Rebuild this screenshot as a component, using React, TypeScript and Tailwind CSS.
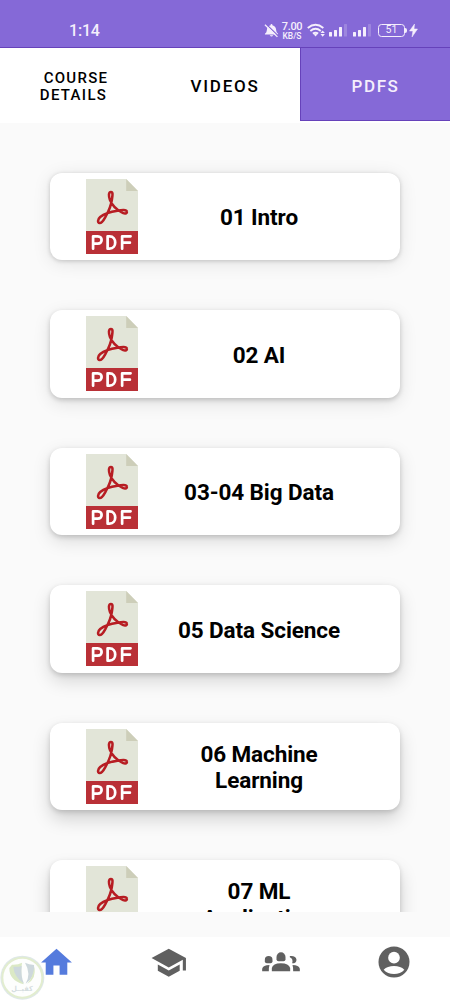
import React from "react";
import { MdHome, MdSchool } from "react-icons/md";

function PdfIcon() {
  return (
    <svg width="52" height="75" viewBox="0 0 154 225" preserveAspectRatio="none" className="mb-[0.5px] block shrink-0">
      <path d="M0 0h119l35 36v122H0z" fill="#e2e5d8" />
      <path d="M119 0l35 36h-35z" fill="#cdceb9" />
      <path d="M0 156h154v69H0z" fill="#b93036" />
      <path
        d="M74 39C66 39 67 52 71 63C78 80 90 91 104 99C114 106 122 104 121 98C120 91 105 93 93 95C73 98 53 105 42 114C34 121 34 132 40 132C48 133 53 122 59 111C69 93 75 76 77 60C79 47 80 39 74 39z"
        fill="none" stroke="#b71d23" strokeWidth="7.5" strokeLinejoin="round"
      />
      <g fill="none" stroke="#fff" strokeWidth="8" strokeLinecap="round" strokeLinejoin="round">
        <path d="M21 209V172h14c15 0 15 22 0 22H21" />
        <path d="M64 172v37h6c22 0 22-37 0-37z" />
        <path d="M107 209v-37h25M107 191h23" />
      </g>
    </svg>
  );
}

function BellOff() {
  return (
    <svg className="mt-px" width="15" height="15" viewBox="0 0 16 15">
      <path d="M8 .7a1 1 0 0 0-1 1.1Q3.2 3 3 7.2q0 2.4-2 3.7v.9h14v-.9q-2-1.3-2-3.7Q12.8 3 9 1.8A1 1 0 0 0 8 .7zM6.1 12.6q1.9 2.5 3.8 0z" fill="#f5effc" />
      <path d="M2.3 .8L15 13" stroke="#8569d7" strokeWidth="1.3" />
      <path d="M1 1.4L14.3 14.3" stroke="#f5effc" strokeWidth="1.4" />
    </svg>
  );
}

function Signal() {
  return (
    <svg width="19" height="14" viewBox="0 0 19 14" fill="#f5effc">
      <rect x="0" y="9" width="3" height="4.5" rx=".5" />
      <rect x="5" y="7" width="3" height="6.5" rx=".5" />
      <rect x="10" y="4" width="3" height="9.5" rx=".5" />
      <rect x="15" y="1" width="3" height="12.5" rx=".5" opacity=".22" />
    </svg>
  );
}

function StatusBar() {
  return (
    <header className="flex h-12 shrink-0 items-start border-b border-[#6642ba] bg-[#8569d7] pt-[22px] text-[#f5effc]">
      <span className="ml-[69px] w-[195px] text-[16px] leading-[18px] font-medium tracking-[-0.2px]">1:14</span>
      <BellOff />
      <div className="ml-[2px] flex w-[22px] flex-col items-center font-medium">
        <span className="text-[11px] leading-[10px] tracking-[-0.35px]">7.00</span>
        <span className="text-[8.5px] leading-[8px] tracking-[-0.1px]">KB/S</span>
      </div>
      <svg className="ml-[4px] mt-px" width="19" height="15" viewBox="0 0 20 15" fill="none" stroke="#f5effc" strokeWidth="2">
        <path d="M.8 4.8Q9 -2 17.2 4.8M3.5 8Q9 3.5 14.5 8M6.2 10.8Q9 8.8 11.7 10.8" />
        <path d="M7.2 11.6Q9 10.3 10.8 11.6L9 13.7z" fill="#f5effc" stroke="none" />
        <path d="M16.5 7.5l2.3 2.7h-4.6zM16.5 14l2.3-2.7h-4.6z" fill="#f5effc" stroke="none" />
      </svg>
      <div className="ml-[3px] mt-px"><Signal /></div>
      <div className="ml-[5px] mt-px"><Signal /></div>
      <div className="ml-[6px] mt-[2px] flex h-[13px] w-[27px] items-center justify-center rounded-[3.5px] border border-[#f5effc] text-[10.5px] leading-none">51</div>
      <div className="mt-[6px] h-[5px] w-[2px] rounded-r bg-[#f5effc]" />
      <svg className="ml-[2px] mt-[2px]" width="10" height="13" viewBox="0 0 10 13">
        <path d="M5.5 0L.5 7h3.4L3 13l5.5-8H5z" fill="#f5effc" stroke="#f5effc" strokeWidth=".5" />
      </svg>
    </header>
  );
}

function Tabs() {
  return (
    <nav className="flex h-[75px] shrink-0 bg-white text-black">
      <button className="flex w-[150px] flex-col items-center justify-center pt-[3px] text-[15px] leading-[17.5px] font-medium tracking-[1.3px]">
        <span className="pl-[2px]">COURSE</span>
        <span className="pr-[3px]">DETAILS</span>
      </button>
      <button className="flex w-[150px] items-center justify-center pt-[2px] text-[17px] font-medium tracking-[1.75px]">VIDEOS</button>
      <button className="flex h-[73px] w-[150px] items-center justify-center border-b border-l border-[#6642ba] bg-[#8569d7] pt-[5px] text-[17px] font-medium tracking-[1.6px] text-[#f5effc]">PDFS</button>
    </nav>
  );
}

const files = [
  { title: "01 Intro", shadow: "shadow-[0_1px_4px_rgba(0,0,0,.18),0_3px_18px_rgba(0,0,0,.10)]" },
  { title: "02 AI", shadow: "shadow-[0_2px_5px_rgba(0,0,0,.18),0_5px_18px_rgba(0,0,0,.11)]" },
  { title: "03-04 Big Data", shadow: "shadow-[0_2px_5px_rgba(0,0,0,.17),0_6px_18px_rgba(0,0,0,.13)]" },
  { title: "05 Data Science", shadow: "shadow-[0_2px_5px_rgba(0,0,0,.16),0_8px_18px_rgba(0,0,0,.15)]" },
  { title: "06 Machine Learning", shadow: "shadow-[0_2px_5px_rgba(0,0,0,.15),0_9px_18px_rgba(0,0,0,.17)]" },
  { title: "07 ML Application", shadow: "shadow-[0_2px_5px_rgba(0,0,0,.14),0_10px_18px_rgba(0,0,0,.18)]" },
];

function GroupIcon() {
  return (
    <svg width="38" height="20" viewBox="0 0 113 60" fill="#606060">
      <path d="M43 15a13.5 14 0 0 1 27 0v7q0 6-6 6H49q-6 0-6-6z" />
      <path d="M8 23a11.5 11 0 0 1 23 0v5q0 6-6 6H14q-6 0-6-6z" />
      <path d="M83 12q18-2 20 11 0 11-13 11 4-13-7-18z" />
      <path d="M29 58V48q3-14 27-14t28 14v10z" />
      <path d="M0 58V50q3-11 22-11-2 6-2 19z" />
      <path d="M113 58V50q-3-11-22-11 2 6 2 19z" />
    </svg>
  );
}

function AccountIcon() {
  return (
    <svg width="32" height="32" viewBox="0 0 96 96" className="mb-px">
      <circle cx="48" cy="48" r="46.5" fill="#606060" />
      <circle cx="48" cy="35" r="17.5" fill="#fff" />
      <path d="M17 71Q28 60 48 60t31 11Q67 84 48 84T17 71z" fill="#fff" />
    </svg>
  );
}

function Watermark() {
  return (
    <svg className="absolute left-0 top-[18px]" width="46" height="46" viewBox="0 0 138 138">
      <circle cx="67" cy="68" r="66" fill="#dfe8e9" />
      <circle cx="67" cy="68" r="60" fill="#fdfefd" stroke="#e2edcf" strokeWidth="6" />
      <path d="M36 29q18 1 30-6-7 43 5 65Q27 76 28 39z" fill="#dbe9c5" />
      <path d="M40 35q15 2 25-3-3 32 7 54Q42 66 40 35z" fill="#cdd8dc" />
      <path d="M75 23q12 6 27 7 7 34-25 56 17-30-2-63z" fill="#cdd8dc" />
      <path d="M103 35q7 36-21 51 17-19 21-51z" fill="#dbe9c5" />
      <text x="66" y="107" textAnchor="middle" fontSize="21" textLength="64" lengthAdjust="spacingAndGlyphs" fontWeight="700" fill="#d5dddf" className="font-['DejaVu_Sans',sans-serif]">كفيــل</text>
    </svg>
  );
}

function BottomNav() {
  return (
    <nav className="relative flex h-[63px] shrink-0 bg-white pb-[12px] text-[#606060]">
      <button className="flex flex-1 items-center justify-center pb-px text-[#557bdd]"><MdHome size={37} /></button>
      <button className="flex flex-1 items-center justify-center"><MdSchool size={37.5} /></button>
      <button className="flex flex-1 items-center justify-center pb-px"><GroupIcon /></button>
      <button className="flex flex-1 items-center justify-center"><AccountIcon /></button>
      <Watermark />
    </nav>
  );
}

export default function App() {
  return (
    <div className="flex h-[1000px] w-[450px] flex-col overflow-hidden bg-[#fafafa] font-['Roboto',sans-serif]">
      <StatusBar />
      <Tabs />
      <main className="flex h-[789px] shrink-0 flex-col gap-[50px] overflow-hidden px-[50px] pt-[49.7px]">
        {files.map((file) => (
          <article key={file.title} className={`flex h-[87.5px] shrink-0 items-center rounded-[12px] bg-white pl-[36.3px] ${file.shadow}`}>
            <PdfIcon />
            <h2 className="mt-[2px] ml-[36.7px] w-[168px] text-center text-[22.5px] leading-[26.5px] font-bold tracking-[-0.1px] text-black">{file.title}</h2>
          </article>
        ))}
      </main>
      <div className="h-[25px] shrink-0" />
      <BottomNav />
    </div>
  );
}
